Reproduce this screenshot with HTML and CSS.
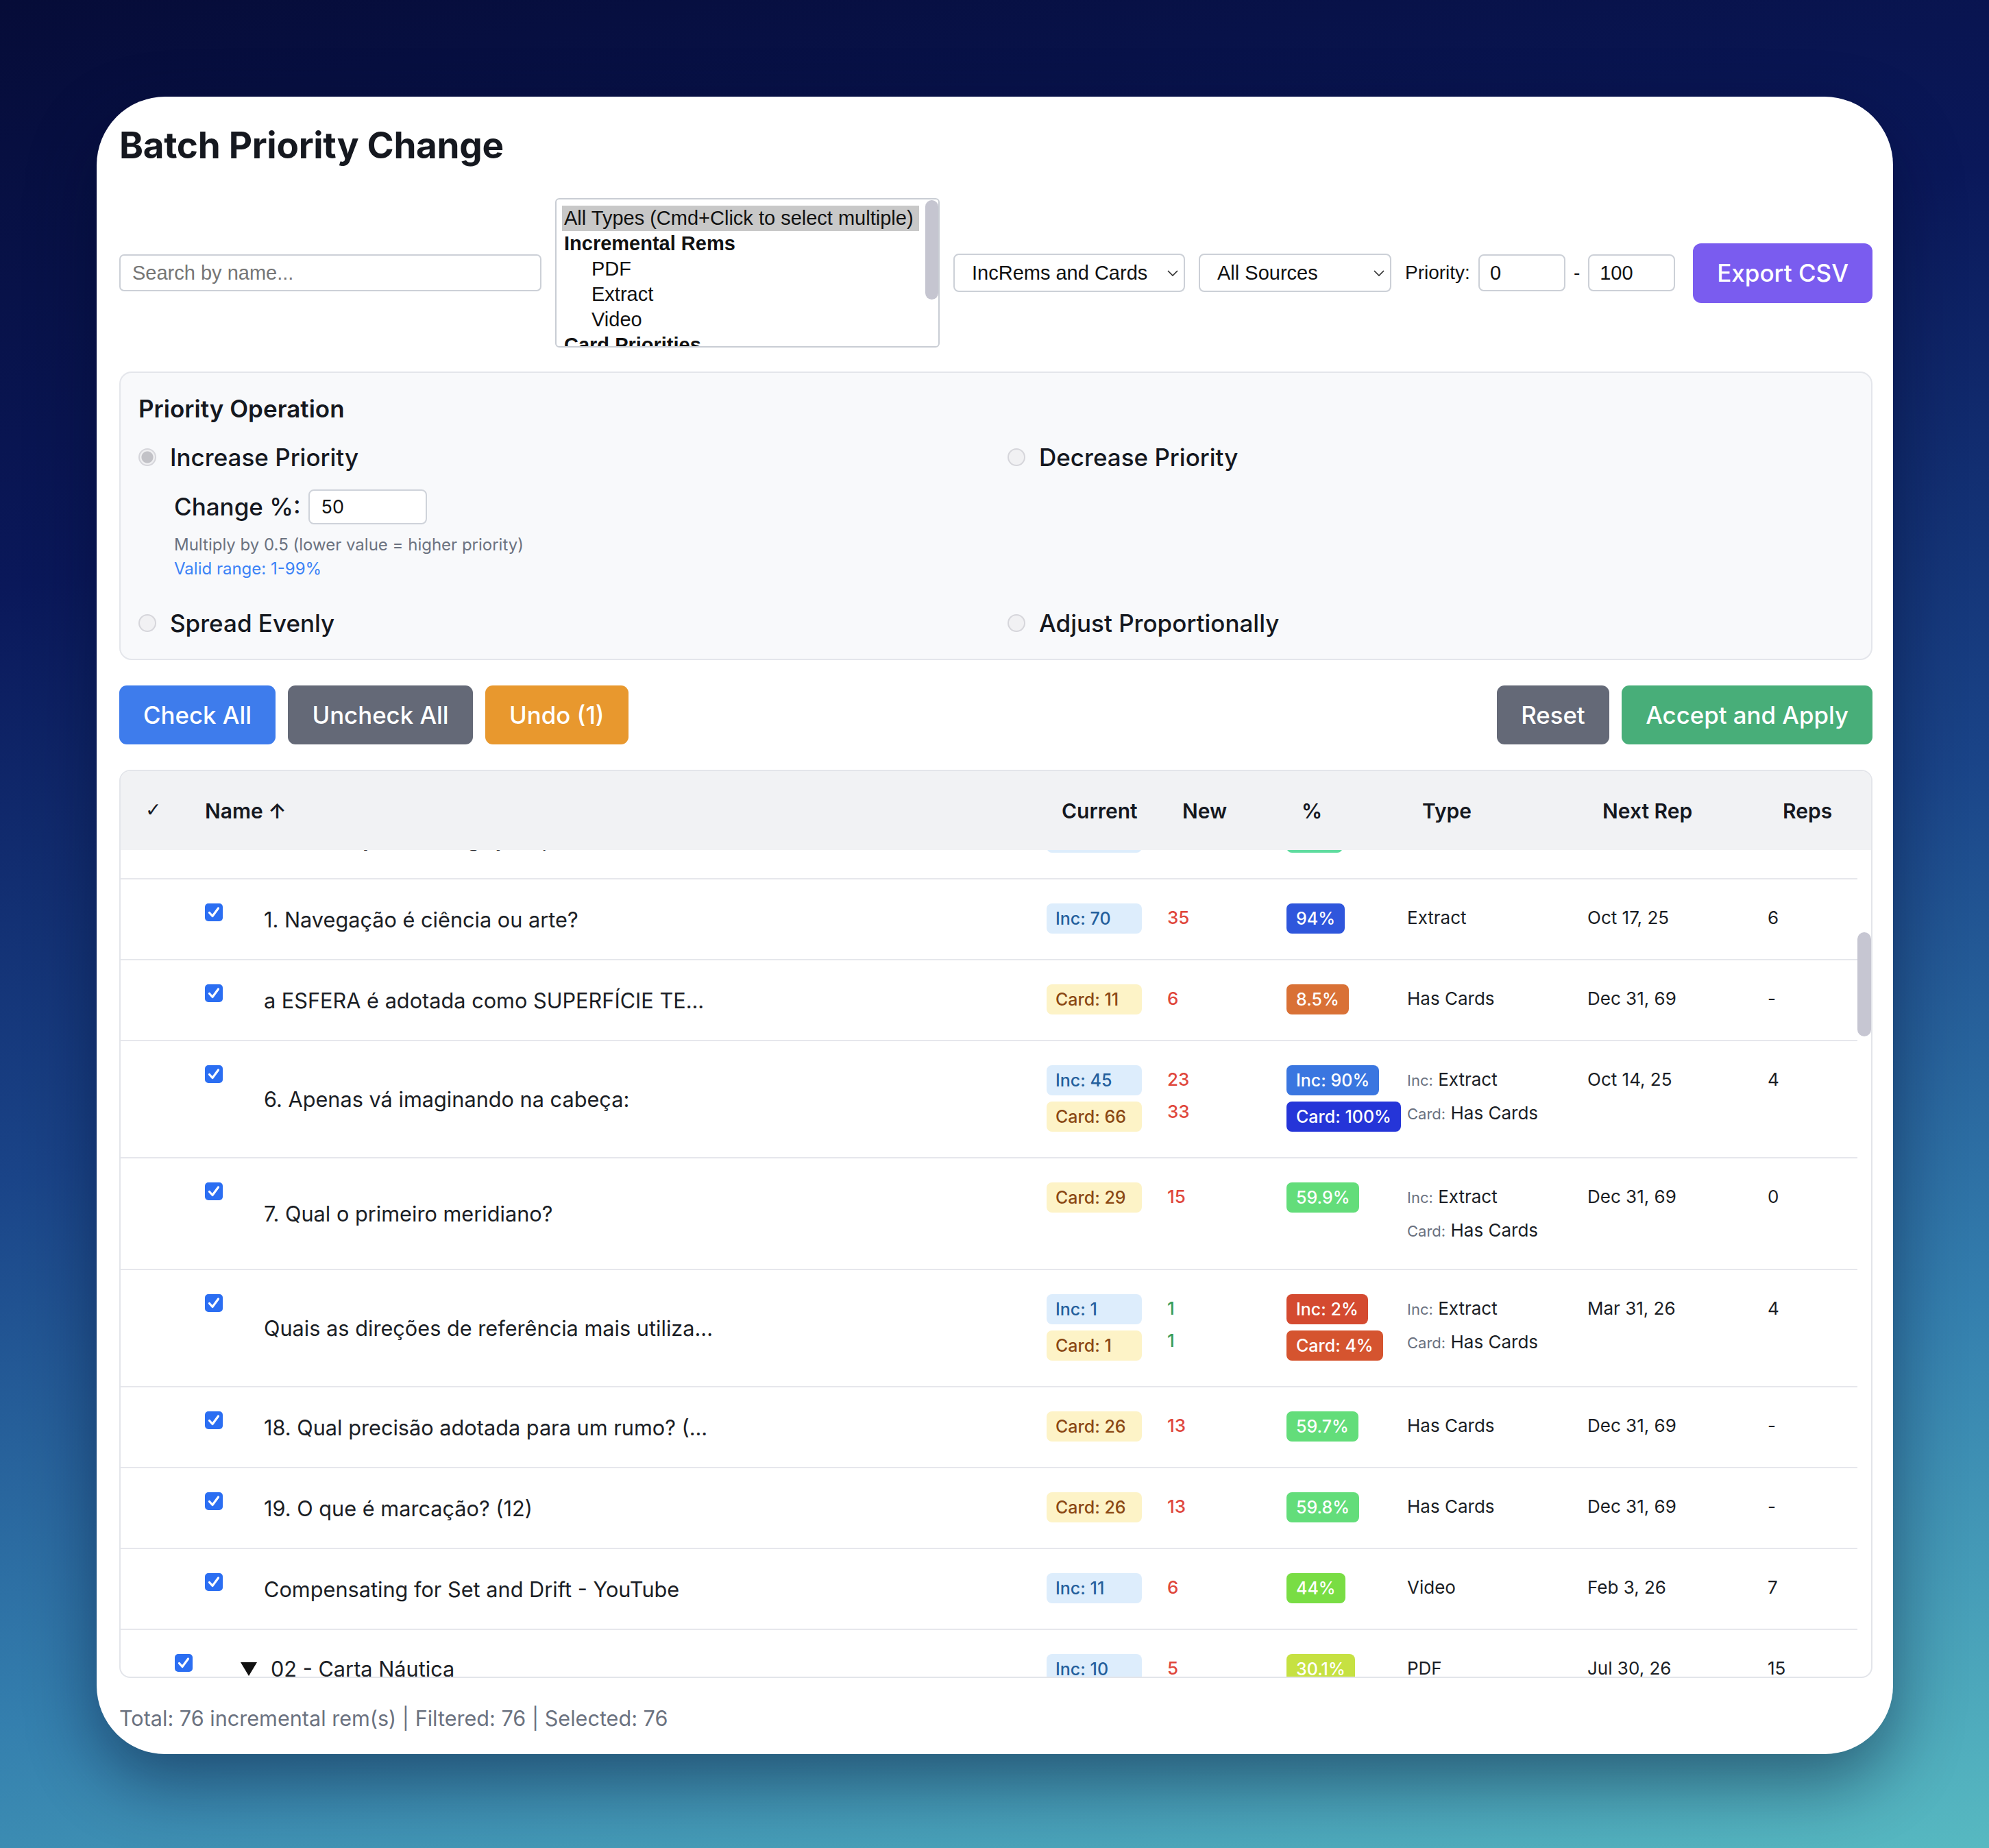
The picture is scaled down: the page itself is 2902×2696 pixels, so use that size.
FILE: index.html
```html
<!DOCTYPE html>
<html lang="en">
<head>
<meta charset="utf-8">
<title>Batch Priority Change</title>
<link rel="stylesheet" href="styles.css">
</head>
<body>
<div class="window">
  <h1 class="title">Batch Priority Change</h1>

  <div class="filters">
    <input class="search" type="text" placeholder="Search by name...">
    <div class="listbox">
      <div class="opt selected">All Types (Cmd+Click to select multiple)</div>
      <div class="opt group">Incremental Rems</div>
      <div class="opt sub">PDF</div>
      <div class="opt sub">Extract</div>
      <div class="opt sub">Video</div>
      <div class="opt group">Card Priorities</div>
      <div class="opt sub">Has Cards</div>
      <div class="lb-thumb"></div>
    </div>
    <div class="select-wrap w1">
      <select class="select"><option>IncRems and Cards</option></select>
      <svg class="chev" viewBox="0 0 16 9"><path d="M1 1 L8 8 L15 1" fill="none" stroke="#2a2a2a" stroke-width="1.6"/></svg>
    </div>
    <div class="select-wrap w2">
      <select class="select"><option>All Sources</option></select>
      <svg class="chev" viewBox="0 0 16 9"><path d="M1 1 L8 8 L15 1" fill="none" stroke="#2a2a2a" stroke-width="1.6"/></svg>
    </div>
    <div class="prio">
      <span>Priority:</span>
      <input class="num-input" type="text" value="0">
      <span>-</span>
      <input class="num-input" type="text" value="100">
    </div>
    <button class="export">Export CSV</button>
  </div>

  <div class="panel">
    <h2 class="panel-title">Priority Operation</h2>
    <div class="ops">
      <div class="op">
        <label class="radio-label"><input type="radio" name="op" checked><span>Increase Priority</span></label>
        <div class="change-row"><span>Change %:</span><input class="pct-input" type="text" value="50"></div>
        <div class="help">Multiply by 0.5 (lower value = higher priority)</div>
        <div class="valid">Valid range: 1-99%</div>
      </div>
      <div class="op">
        <label class="radio-label"><input type="radio" name="op"><span>Decrease Priority</span></label>
      </div>
      <div class="op">
        <label class="radio-label"><input type="radio" name="op"><span>Spread Evenly</span></label>
      </div>
      <div class="op">
        <label class="radio-label"><input type="radio" name="op"><span>Adjust Proportionally</span></label>
      </div>
    </div>
  </div>

  <div class="actions">
    <div class="btn-group">
      <button class="btn btn-blue">Check All</button>
      <button class="btn btn-gray">Uncheck All</button>
      <button class="btn btn-orange">Undo (1)</button>
    </div>
    <div class="btn-group">
      <button class="btn btn-gray">Reset</button>
      <button class="btn btn-green">Accept and Apply</button>
    </div>
  </div>

  <div class="table">
    <div class="thead">
      <div class="th th-name"><span class="th-check">✓</span><span>Name ↑</span></div>
      <div class="th">Current</div>
      <div class="th">New</div>
      <div class="th">%</div>
      <div class="th">Type</div>
      <div class="th">Next Rep</div>
      <div class="th">Reps</div>
      <div></div>
    </div>
    <div class="tbody" id="tbody">
      <div class="row">
        <div class="cell-name d1"><span class="cb"><svg viewBox="0 0 26 26"><path d="M6.5 13.5 L11 18.5 L19.5 7"/></svg></span><span class="name">0. Introdução à navegação (p. 1)</span></div>
        <div class="cell"><span class="badge inc">Inc: 72</span></div>
        <div class="cell txt"><div class="line num up">36</div></div>
        <div class="cell"><span class="pct" style="background:#5fdc9f">97%</span></div>
        <div class="cell txt"><div class="line">Extract</div></div>
        <div class="cell txt"><div class="line">Oct 16, 25</div></div>
        <div class="cell txt"><div class="line">5</div></div>
      </div>
      <div class="row">
        <div class="cell-name d1"><span class="cb"><svg viewBox="0 0 26 26"><path d="M6.5 13.5 L11 18.5 L19.5 7"/></svg></span><span class="name">1. Navegação é ciência ou arte?</span></div>
        <div class="cell"><span class="badge inc">Inc: 70</span></div>
        <div class="cell txt"><div class="line num up">35</div></div>
        <div class="cell"><span class="pct" style="background:#2f56dc">94%</span></div>
        <div class="cell txt"><div class="line">Extract</div></div>
        <div class="cell txt"><div class="line">Oct 17, 25</div></div>
        <div class="cell txt"><div class="line">6</div></div>
      </div>
      <div class="row">
        <div class="cell-name d1"><span class="cb"><svg viewBox="0 0 26 26"><path d="M6.5 13.5 L11 18.5 L19.5 7"/></svg></span><span class="name">a ESFERA é adotada como SUPERFÍCIE TE...</span></div>
        <div class="cell"><span class="badge card">Card: 11</span></div>
        <div class="cell txt"><div class="line num up">6</div></div>
        <div class="cell"><span class="pct" style="background:#d97136">8.5%</span></div>
        <div class="cell txt"><div class="line">Has Cards</div></div>
        <div class="cell txt"><div class="line">Dec 31, 69</div></div>
        <div class="cell txt"><div class="line">-</div></div>
      </div>
      <div class="row">
        <div class="cell-name d1"><span class="cb"><svg viewBox="0 0 26 26"><path d="M6.5 13.5 L11 18.5 L19.5 7"/></svg></span><span class="name">6. Apenas vá imaginando na cabeça:</span></div>
        <div class="cell"><span class="badge inc">Inc: 45</span><span class="badge card">Card: 66</span></div>
        <div class="cell txt"><div class="line num up">23</div><div class="line num up">33</div></div>
        <div class="cell"><span class="pct" style="background:#3a76e0">Inc: 90%</span><span class="pct" style="background:#2535d8">Card: 100%</span></div>
        <div class="cell txt"><div class="line"><span class="lbl">Inc:</span> Extract</div><div class="line"><span class="lbl">Card:</span> Has Cards</div></div>
        <div class="cell txt"><div class="line">Oct 14, 25</div></div>
        <div class="cell txt"><div class="line">4</div></div>
      </div>
      <div class="row">
        <div class="cell-name d1"><span class="cb"><svg viewBox="0 0 26 26"><path d="M6.5 13.5 L11 18.5 L19.5 7"/></svg></span><span class="name">7. Qual o primeiro meridiano?</span></div>
        <div class="cell"><span class="badge card">Card: 29</span></div>
        <div class="cell txt"><div class="line num up">15</div></div>
        <div class="cell"><span class="pct" style="background:#63dd7a">59.9%</span></div>
        <div class="cell txt"><div class="line"><span class="lbl">Inc:</span> Extract</div><div class="line"><span class="lbl">Card:</span> Has Cards</div></div>
        <div class="cell txt"><div class="line">Dec 31, 69</div></div>
        <div class="cell txt"><div class="line">0</div></div>
      </div>
      <div class="row">
        <div class="cell-name d1"><span class="cb"><svg viewBox="0 0 26 26"><path d="M6.5 13.5 L11 18.5 L19.5 7"/></svg></span><span class="name">Quais as direções de referência mais utiliza...</span></div>
        <div class="cell"><span class="badge inc">Inc: 1</span><span class="badge card">Card: 1</span></div>
        <div class="cell txt"><div class="line num down">1</div><div class="line num down">1</div></div>
        <div class="cell"><span class="pct" style="background:#d44a30">Inc: 2%</span><span class="pct" style="background:#d5542f">Card: 4%</span></div>
        <div class="cell txt"><div class="line"><span class="lbl">Inc:</span> Extract</div><div class="line"><span class="lbl">Card:</span> Has Cards</div></div>
        <div class="cell txt"><div class="line">Mar 31, 26</div></div>
        <div class="cell txt"><div class="line">4</div></div>
      </div>
      <div class="row">
        <div class="cell-name d1"><span class="cb"><svg viewBox="0 0 26 26"><path d="M6.5 13.5 L11 18.5 L19.5 7"/></svg></span><span class="name">18. Qual precisão adotada para um rumo? (...</span></div>
        <div class="cell"><span class="badge card">Card: 26</span></div>
        <div class="cell txt"><div class="line num up">13</div></div>
        <div class="cell"><span class="pct" style="background:#63dd7a">59.7%</span></div>
        <div class="cell txt"><div class="line">Has Cards</div></div>
        <div class="cell txt"><div class="line">Dec 31, 69</div></div>
        <div class="cell txt"><div class="line">-</div></div>
      </div>
      <div class="row">
        <div class="cell-name d1"><span class="cb"><svg viewBox="0 0 26 26"><path d="M6.5 13.5 L11 18.5 L19.5 7"/></svg></span><span class="name">19. O que é marcação? (12)</span></div>
        <div class="cell"><span class="badge card">Card: 26</span></div>
        <div class="cell txt"><div class="line num up">13</div></div>
        <div class="cell"><span class="pct" style="background:#63dd7a">59.8%</span></div>
        <div class="cell txt"><div class="line">Has Cards</div></div>
        <div class="cell txt"><div class="line">Dec 31, 69</div></div>
        <div class="cell txt"><div class="line">-</div></div>
      </div>
      <div class="row">
        <div class="cell-name d1"><span class="cb"><svg viewBox="0 0 26 26"><path d="M6.5 13.5 L11 18.5 L19.5 7"/></svg></span><span class="name">Compensating for Set and Drift - YouTube</span></div>
        <div class="cell"><span class="badge inc">Inc: 11</span></div>
        <div class="cell txt"><div class="line num up">6</div></div>
        <div class="cell"><span class="pct" style="background:#79dd44">44%</span></div>
        <div class="cell txt"><div class="line">Video</div></div>
        <div class="cell txt"><div class="line">Feb 3, 26</div></div>
        <div class="cell txt"><div class="line">7</div></div>
      </div>
      <div class="row">
        <div class="cell-name d0"><span class="cb"><svg viewBox="0 0 26 26"><path d="M6.5 13.5 L11 18.5 L19.5 7"/></svg></span><svg class="tri" viewBox="0 0 24 20"><polygon points="0,0 24,0 12,20"/></svg><span class="name g">02 - Carta Náutica</span></div>
        <div class="cell"><span class="badge inc">Inc: 10</span></div>
        <div class="cell txt"><div class="line num up">5</div></div>
        <div class="cell"><span class="pct" style="background:#c6e142">30.1%</span></div>
        <div class="cell txt"><div class="line">PDF</div></div>
        <div class="cell txt"><div class="line">Jul 30, 26</div></div>
        <div class="cell txt"><div class="line">15</div></div>
      </div>
      <div class="row">
        <div class="cell-name d1"><span class="cb"><svg viewBox="0 0 26 26"><path d="M6.5 13.5 L11 18.5 L19.5 7"/></svg></span><span class="name">1. O que é uma carta náutica?</span></div>
        <div class="cell"><span class="badge inc">Inc: 12</span></div>
        <div class="cell txt"><div class="line num up">6</div></div>
        <div class="cell"><span class="pct" style="background:#79dd44">45%</span></div>
        <div class="cell txt"><div class="line">Extract</div></div>
        <div class="cell txt"><div class="line">Aug 2, 26</div></div>
        <div class="cell txt"><div class="line">3</div></div>
      </div>
    </div>
    <div class="scroll-thumb"></div>
  </div>

  <div class="footer">Total: 76 incremental rem(s) | Filtered: 76 | Selected: 76</div>
</div>
<script src="script.js"></script>
</body>
</html>
```

FILE: styles.css
```css
* { box-sizing: border-box; }
html, body { margin: 0; }
body {
  width: 2902px;
  min-height: 2696px;
  padding: 141px 140px 0 141px;
  background: linear-gradient(168deg, #060c38 0%, #0a185a 26%, #1a4488 52%, #347fae 76%, #57b9c1 100%);
  font-family: Inter, "Noto Sans", sans-serif;
  color: #1b1e25;
}
.window {
  width: 2621px;
  background: #fff;
  border-radius: 100px;
  padding: 40px 30px 32px 33px;
  box-shadow: 0 40px 100px rgba(0, 8, 40, 0.45);
  overflow: hidden;
}
.title {
  margin: 0;
  font-size: 53px;
  line-height: 63px;
  font-weight: 700;
  letter-spacing: -0.3px;
  color: #15181f;
}

/* filters */
.filters {
  display: flex;
  align-items: center;
  gap: 20px;
  margin-top: 45px;
}
.search {
  flex: none;
  width: 616px;
  height: 54px;
  border: 2px solid #ccd0d7;
  border-radius: 7px;
  padding: 0 17px;
  font: 29px "Liberation Sans", Arial, sans-serif;
  color: #111;
  background: #fff;
}
.search::placeholder { color: #767676; }
.listbox {
  flex: none;
  position: relative;
  width: 561px;
  height: 218px;
  border: 2px solid #c9cdd4;
  border-radius: 6px;
  padding: 9px 28px 0 8px;
  overflow: hidden;
  font: 29px/37px "Liberation Sans", Arial, sans-serif;
  color: #111;
  background: #fff;
}
.opt { height: 37px; padding-left: 3px; white-space: nowrap; }
.opt.selected { background: #c8c8c8; }
.opt.group { font-weight: 700; }
.opt.sub { padding-left: 43px; }
.lb-thumb {
  position: absolute;
  right: 0;
  top: 1px;
  width: 19px;
  height: 145px;
  border-radius: 10px;
  background: #c5c5d0;
}
.select-wrap { position: relative; flex: none; }
.select {
  appearance: none;
  -webkit-appearance: none;
  height: 56px;
  width: 100%;
  border: 2px solid #ccd0d7;
  border-radius: 8px;
  padding: 0 40px 0 25px;
  font: 29px "Liberation Sans", Arial, sans-serif;
  color: #111;
  background: #fff;
}
.w1 { width: 338px; }
.w2 { width: 281px; }
.chev {
  position: absolute;
  right: 10px;
  top: 24px;
  width: 16px;
  height: 9px;
}
.prio {
  flex: none;
  display: flex;
  align-items: center;
  gap: 12px;
  font: 28px "Liberation Sans", Arial, sans-serif;
  color: #111;
}
.num-input {
  width: 127px;
  height: 54px;
  border: 2px solid #ccd0d7;
  border-radius: 8px;
  padding: 0 15px;
  font: 29px "Liberation Sans", Arial, sans-serif;
  color: #111;
  background: #fff;
}
.export {
  flex: none;
  margin-left: auto;
  height: 87px;
  padding: 0 35px;
  border: none;
  border-radius: 12px;
  background: #7a5cef;
  color: #fff;
  white-space: nowrap;
  font: 500 35px Inter, sans-serif;
}

/* panel */
.panel {
  margin-top: 35px;
  border: 2px solid #e4e6eb;
  border-radius: 18px;
  background: #f8f9fb;
  padding: 31px 28px 30px 26px;
}
.panel-title {
  margin: 0;
  font-size: 35px;
  line-height: 42px;
  font-weight: 600;
  color: #15181f;
}
.ops {
  display: grid;
  grid-template-columns: 1fr 1fr;
  column-gap: 36px;
  row-gap: 40px;
  margin-top: 28px;
}
.radio-label {
  display: flex;
  align-items: center;
  gap: 20px;
  height: 44px;
  font-size: 35px;
  font-weight: 500;
  color: #15181f;
}
.radio-label input {
  appearance: none;
  -webkit-appearance: none;
  margin: 0;
  width: 26px;
  height: 26px;
  border-radius: 50%;
  border: 2px solid #d6d6db;
  background: #f1f1f3;
}
.radio-label input:checked {
  background: radial-gradient(circle, #c2c2c7 0 52%, #efeff1 58%);
}
.change-row {
  display: flex;
  align-items: center;
  gap: 11px;
  height: 50px;
  margin: 25px 0 0 52px;
  font-size: 35px;
  font-weight: 500;
  color: #15181f;
}
.pct-input {
  width: 173px;
  height: 51px;
  border: 2px solid #cfd3da;
  border-radius: 8px;
  background: #fff;
  padding: 0 17px;
  font: 27px Inter, sans-serif;
  color: #111;
}
.help {
  margin: 13px 0 0 52px;
  font-size: 24px;
  line-height: 35px;
  color: #6b7280;
}
.valid {
  margin-left: 52px;
  font-size: 24px;
  line-height: 35px;
  color: #3b82f6;
}

/* actions */
.actions {
  display: flex;
  justify-content: space-between;
  margin-top: 37px;
}
.btn-group { display: flex; gap: 18.5px; }
.btn {
  height: 86px;
  padding: 0 35px;
  border: none;
  border-radius: 11px;
  color: #fff;
  white-space: nowrap;
  font: 500 34.8px Inter, sans-serif;
}
.btn-blue { background: #3e7cec; }
.btn-gray { background: #646977; }
.btn-orange { background: #e8982e; }
.btn-green { background: #48ae79; }

/* table */
.table {
  position: relative;
  margin-top: 37px;
  border: 2px solid #e3e5ea;
  border-radius: 16px;
  overflow: hidden;
}
.thead {
  display: grid;
  grid-template-columns: 1351px 176px 174px 176px 263px 263px 131px 20px;
  align-items: center;
  height: 115px;
  background: #f1f2f4;
  font-size: 30px;
  font-weight: 600;
  color: #15181f;
}
.th { padding-left: 22px; white-space: nowrap; }
.th-name { display: flex; padding-left: 36px; }
.th-check { width: 87px; font-family: "DejaVu Sans", sans-serif; font-weight: 400; font-size: 28px; }
.tbody {
  height: 1206px;
  overflow: hidden;
}
.row {
  display: grid;
  grid-template-columns: 1351px 176px 174px 176px 263px 263px 131px;
  width: 2534px;
  border-bottom: 2px solid #e6e7ec;
}
.cell { padding: 35px 0 28px; }
.cell.txt { padding: 32px 0 31px; }
.cell-name {
  display: flex;
  align-items: center;
}
.d1 { padding-left: 123px; }
.d0 { padding-left: 79px; }
.cb {
  align-self: flex-start;
  margin-top: 35px;
  width: 26px;
  height: 26px;
  flex: none;
  border-radius: 5px;
  background: #2b6ef2;
}
.cb svg { display: block; width: 26px; height: 26px; }
.cb path { fill: none; stroke: #fff; stroke-width: 3.2; stroke-linecap: round; stroke-linejoin: round; }
.tri { width: 24px; height: 20px; margin-left: 70px; margin-top: -3px; fill: #111; flex: none; }
.name { margin-left: 60px; font-size: 30.7px; color: #1b1e25; white-space: nowrap; }
.name.g { margin-left: 20px; margin-top: -4px; }
.badge {
  display: block;
  width: fit-content;
  min-width: 139px;
  height: 44px;
  line-height: 44px;
  padding: 0 13px;
  border-radius: 8px;
  font-size: 25px;
  font-weight: 500;
  margin-bottom: 9px;
}
.inc { background: #ddedfc; color: #245f9c; }
.card { background: #fdf3c7; color: #8a4814; }
.pct {
  display: block;
  width: fit-content;
  height: 44px;
  line-height: 44px;
  padding: 0 14px;
  border-radius: 8px;
  color: #fff;
  font-size: 25px;
  font-weight: 500;
  margin-bottom: 9px;
}
.line { line-height: 47px; font-size: 26px; color: #1b1e25; white-space: nowrap; }
.num { font-weight: 500; }
.num.up { color: #e0473c; }
.num.down { color: #3a9e5c; }
.lbl { font-size: 22px; color: #6b7280; }
.scroll-thumb {
  position: absolute;
  right: 0;
  top: 235px;
  width: 20px;
  height: 152px;
  border-radius: 10px;
  background: #c6c6d2;
}

.footer {
  margin-top: 39px;
  font-size: 30.6px;
  line-height: 40px;
  color: #6b7280;
}
```

FILE: script.js
```js
document.getElementById('tbody').scrollTop = 75;
```
